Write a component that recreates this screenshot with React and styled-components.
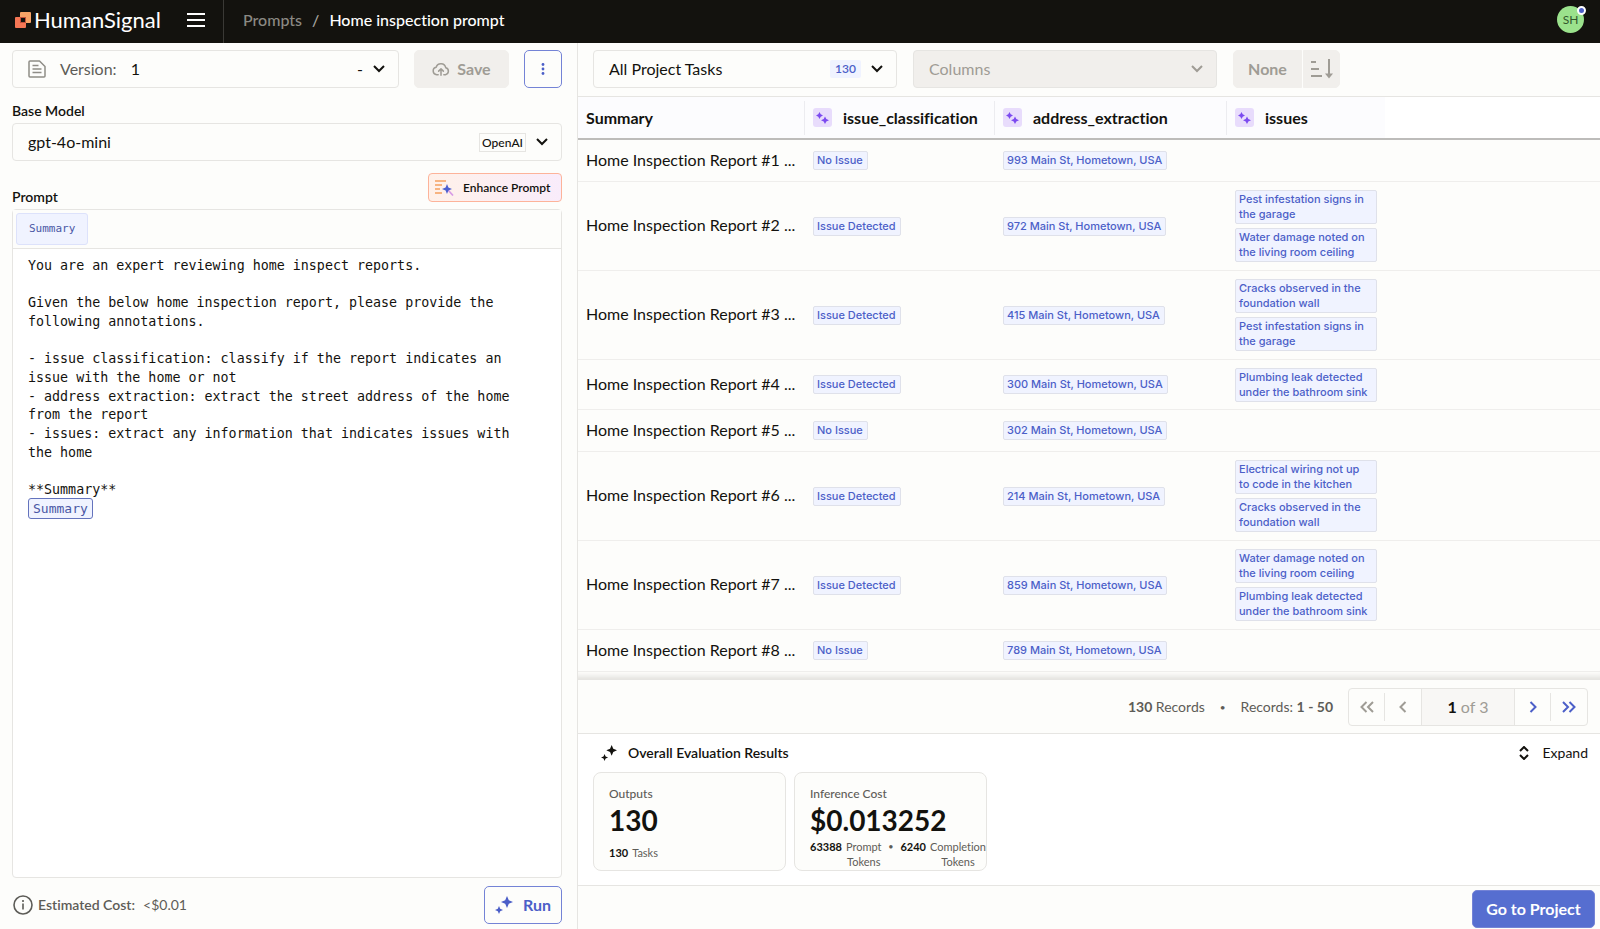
import React, { useState } from 'react'
import styled, { createGlobalStyle, ThemeProvider } from 'styled-components'

const theme = {
  font: 'Lato, "Liberation Sans", sans-serif',
  mono: '"DejaVu Sans Mono", "Liberation Mono", monospace',
  colors: {
    ink: '#13120e',
    text: '#1b1a17',
    muted: '#5d5c57',
    faint: '#9f9c95',
    line: '#e6e5e2',
    surface: '#fdfdfb',
    disabled: '#f1efec',
    primary: '#4c5fc8',
    primaryLine: '#7483d6',
    primaryFill: '#566ed0',
    chip: '#f0f3ff'
  }
}

const GlobalStyle = createGlobalStyle`
  *, *::before, *::after {
    box-sizing: border-box;
  }

  body {
    margin: 0;
    background: #fdfdfb;
    color: #13120e;
    font-variant-ligatures: none;
  }

  button, select {
    font: inherit;
    color: inherit;
  }
`

const Page = styled.div`
  display: grid;
  grid-template-rows: 43px minmax(0, 1fr);
  height: 100vh;
  font-family: ${props => props.theme.font};
  font-size: 16px;
  line-height: 20px;
`

const TopBar = styled.header`
  display: flex;
  align-items: stretch;
  padding: 0 16px 4px 15px;
  background: ${props => props.theme.colors.ink};
  color: #ffffff;
`

const Brand = styled.a`
  display: flex;
  align-items: center;
  gap: 3px;
  width: 172px;
  color: inherit;
  font-size: 22px;
  text-decoration: none;
`

const MenuButton = styled.button`
  display: flex;
  align-items: center;
  padding: 0;
  border: none;
  background: none;
`

const Crumbs = styled.nav`
  display: flex;
  align-items: center;
  gap: 10px;
  flex: 1;
  margin: 0 0 -4px 18px;
  padding: 0 0 4px 19px;
  border-left: 1px solid #3a3935;
  font-weight: 500;
  color: #a8a6a0;

  a {
    color: #8b8983;
    text-decoration: none;
  }

  strong {
    font-weight: 500;
    color: #ffffff;
  }
`

const Avatar = styled.button`
  position: relative;
  align-self: center;
  width: 27px;
  height: 27px;
  padding: 0;
  border: none;
  border-radius: 50%;
  background: #9be28c;
  color: #33582c;
  font-size: 12px;
  line-height: 27px;

  &::after {
    content: '';
    position: absolute;
    top: 0;
    right: -2px;
    width: 9px;
    height: 9px;
    border: 2px solid #ffffff;
    border-radius: 50%;
    background: ${props => props.theme.colors.primary};
  }
`

const Workspace = styled.main`
  display: grid;
  grid-template-columns: 578px minmax(0, 1fr);
  min-height: 0;
`

const Editor = styled.section`
  display: flex;
  flex-direction: column;
  padding: 7px 15px 5px 12px;
  border-right: 1px solid ${props => props.theme.colors.line};
`

const Toolbar = styled.div`
  display: flex;
  gap: 15px;
`

const Field = styled.div`
  display: flex;
  align-items: center;
  flex: ${props => props.$grow ? 1 : 'none'};
  width: ${props => props.$width || 'auto'};
  height: 38px;
  padding: 0 13px 0 15px;
  border: 1px solid ${props => props.theme.colors.line};
  border-radius: 4px;
  background: ${props => props.$disabled ? props.theme.colors.disabled : props.theme.colors.surface};
  color: ${props => props.$disabled ? props.theme.colors.faint : 'inherit'};

  label {
    margin: 0 14px;
    color: ${props => props.theme.colors.muted};
  }

  select {
    flex: 1;
    height: 100%;
    padding: 0;
    appearance: none;
    border: none;
    background: none;
    opacity: 1;
    color: inherit;
  }

  > svg:last-child {
    margin-left: 10px;
  }
`

const Provider = styled.span`
  padding: 0 2px;
  border: 1px solid ${props => props.theme.colors.line};
  font-size: 12px;
  font-weight: 500;
  line-height: 17px;
`

const Count = styled.span`
  padding: 0 5px;
  border-radius: 2px;
  background: ${props => props.theme.colors.chip};
  color: ${props => props.theme.colors.primary};
  font-size: 12px;
  font-weight: 600;
  line-height: 18px;
`

const Button = styled.button`
  display: flex;
  align-items: center;
  justify-content: center;
  gap: 10px;
  width: ${props => props.$width};
  height: 38px;
  padding: 0;
  border: 1px solid ${props => props.theme.colors.primaryLine};
  border-radius: 5px;
  background: ${props => props.$filled ? props.theme.colors.primaryFill : props.theme.colors.surface};
  color: ${props => props.$filled ? '#ffffff' : props.theme.colors.primary};
  font-weight: 700;

  &:disabled {
    gap: 7px;
    border-color: ${props => props.theme.colors.disabled};
    background: ${props => props.theme.colors.disabled};
    color: ${props => props.theme.colors.faint};
  }
`

const FieldLabel = styled.label`
  font-size: 14px;
  font-weight: 600;
  line-height: 16px;
`

const ModelGroup = styled.div`
  display: flex;
  flex-direction: column;
  gap: 4px;
  margin: 15px 0 12px;
`

const PromptHead = styled.div`
  display: flex;
  align-items: flex-end;
  justify-content: space-between;
  margin-bottom: 4px;
`

const EnhanceButton = styled.button`
  display: flex;
  align-items: center;
  gap: 9px;
  width: 134px;
  height: 29px;
  margin-bottom: 3px;
  padding: 0 6px;
  border: 1px solid #fdb39a;
  border-radius: 4px;
  background: linear-gradient(90deg, #fff1e9, #f9ecfb);
  color: ${props => props.theme.colors.ink};
  font-size: 12px;
  font-weight: 600;
`

const PromptBox = styled.div`
  display: flex;
  flex-direction: column;
  flex: 1;
  margin-bottom: 8px;
  border: 1px solid ${props => props.theme.colors.line};
  border-radius: 4px;
  background: #ffffff;
  font-family: ${props => props.theme.mono};
`

const VariableBar = styled.div`
  padding: 3px;
  border-bottom: 1px solid ${props => props.theme.colors.line};
  background: ${props => props.theme.colors.surface};
`

const Variable = styled.button`
  display: block;
  height: 32px;
  padding: 0 12px;
  border: 1px solid #dde2fb;
  border-radius: 3px;
  background: ${props => props.theme.colors.chip};
  color: #4a57a5;
  font-family: inherit;
  font-size: 11px;
`

const PromptText = styled.textarea`
  display: block;
  height: 249px;
  padding: 8px 15px 0;
  border: none;
  outline: none;
  resize: none;
  overflow: hidden;
  background: none;
  color: ${props => props.theme.colors.ink};
  font-family: inherit;
  line-height: 1.4;
`

const InlineVariable = styled.button`
  align-self: flex-start;
  height: 21px;
  margin: 0 15px;
  padding: 0 4px;
  border: 1px solid #6473bd;
  border-radius: 3px;
  background: ${props => props.theme.colors.chip};
  color: #4a57a5;
  font-family: inherit;
  font-size: 13px;
  line-height: 18px;
`

const EditorFooter = styled.div`
  display: flex;
  align-items: center;
  gap: 5px;
  padding-left: 1px;
  color: ${props => props.theme.colors.muted};
  font-size: 14px;

  strong {
    font-weight: 600;
  }

  span {
    flex: 1;
    margin-left: 3px;
  }

  button {
    font-size: 16px;
  }
`

const Results = styled.section`
  display: grid;
  grid-template-rows: 54px minmax(0, 1fr) 55px auto 43px;
  min-height: 0;
`

const ResultsBar = styled.div`
  display: flex;
  gap: 16px;
  padding: 7px 15px;
  border-bottom: 1px solid ${props => props.theme.colors.line};
`

const SortGroup = styled.div`
  display: flex;
  gap: 1px;

  button:first-child {
    border-radius: 5px 0 0 5px;
  }

  button:last-child {
    border-radius: 0 5px 5px 0;
  }
`

const TableArea = styled.div`
  overflow: hidden;
  box-shadow: inset 0 -8px 6px -6px #dddcd8;
`

const Table = styled.table`
  width: 100%;
  table-layout: fixed;
  border-collapse: separate;
  border-spacing: 0;

  th, td {
    padding: 0 8px;
    text-align: left;
    vertical-align: middle;
  }

  th {
    height: 43px;
    border-bottom: 2px solid #bdbcba;
    background: linear-gradient(#ececf0, #ececf0) right center / 1px 34px no-repeat #fcfcfe;
    font-weight: 700;
  }

  th:nth-child(n + 4) {
    background: #fcfcfe;
  }

  th:last-child {
    background: #ffffff;
  }

  td {
    border-bottom: 1px solid #efeeec;
  }
`

const Row = styled.tr`
  height: ${props => props.$lines === 0 ? '42px' : props.$lines === 1 ? '50px' : '89px'};
`

const Summary = styled.div`
  padding-bottom: 2px;
  overflow: hidden;
  white-space: nowrap;
`

const HeadCell = styled.div`
  display: flex;
  align-items: center;
  gap: 11px;
`

const AiBadge = styled.span`
  display: grid;
  place-items: center;
  width: 19px;
  height: 19px;
  border-radius: 3px;
  background: #e8dcfc;
  color: #7c4af0;
`

const ChipStack = styled.div`
  display: flex;
  flex-direction: column;
  align-items: ${props => props.$fill ? 'stretch' : 'flex-start'};
  gap: 4px;
`

const Chip = styled.span`
  padding: 1px 4px 1px 3px;
  border: 1px solid #dfe1ea;
  border-radius: 2px;
  background: ${props => props.theme.colors.chip};
  color: ${props => props.theme.colors.primary};
  font-family: Inter, sans-serif;
  font-size: 11px;
  font-weight: 500;
  line-height: 15px;
`

const Paging = styled.div`
  display: flex;
  align-items: center;
  justify-content: flex-end;
  gap: 15px;
  padding: 0 12px;
  border-top: 1px solid ${props => props.theme.colors.line};
  border-bottom: 1px solid ${props => props.theme.colors.line};
  color: ${props => props.theme.colors.muted};
  font-size: 14px;

  strong {
    font-weight: 700;
  }
`

const Dot = styled.span`
  font-size: ${props => props.$size};
`

const Pager = styled.div`
  display: grid;
  grid-template-columns: 36px 36px 94px 36px 36px;
  height: 38px;
  border: 1px solid ${props => props.theme.colors.line};
  border-radius: 4px;
  font-size: 16px;
`

const PageButton = styled.button`
  display: grid;
  place-items: center;
  height: 28px;
  margin: 4px 0;
  padding: 0;
  border: 0 solid ${props => props.theme.colors.line};
  border-right-width: ${props => props.$divided ? '1px' : 0};
  background: none;
  color: ${props => props.theme.colors.primary};

  &:disabled {
    color: ${props => props.theme.colors.faint};
  }
`

const PageNumber = styled.span`
  display: flex;
  align-items: center;
  justify-content: center;
  gap: 4px;
  border: 0 solid ${props => props.theme.colors.line};
  border-width: 0 1px;
  background: #f8f7f5;
  color: ${props => props.theme.colors.faint};

  strong {
    color: ${props => props.theme.colors.ink};
  }
`

const Evaluation = styled.div`
  padding: 9px 12px 14px 15px;
  border-bottom: 1px solid ${props => props.theme.colors.line};
  background: #ffffff;
`

const EvaluationHead = styled.div`
  display: flex;
  align-items: center;
  gap: 11px;
  margin-bottom: 9px;
  padding-left: 8px;
  font-size: 14px;

  h2 {
    flex: 1;
    margin: 0;
    font-size: 14px;
    font-weight: 600;
  }
`

const ExpandButton = styled.button`
  display: flex;
  align-items: center;
  gap: 13px;
  padding: 0;
  border: none;
  background: none;
  color: ${props => props.theme.colors.ink};
`

const Cards = styled.div`
  display: flex;
  gap: 8px;
`

const Card = styled.article`
  display: flex;
  flex-direction: column;
  width: 193px;
  height: 99px;
  padding: 13px 0 0 15px;
  border: 1px solid ${props => props.theme.colors.line};
  border-radius: 8px;
  background: ${props => props.theme.colors.surface};
  color: ${props => props.theme.colors.muted};
  font-size: 12px;
  line-height: 16px;

  h3 {
    margin: 0;
    font-size: 12px;
    font-weight: 500;
  }
`

const Figure = styled.div`
  color: ${props => props.theme.colors.ink};
  font-size: 28px;
  font-weight: 700;
  line-height: 36px;
`

const Breakdown = styled.div`
  display: flex;
  gap: 4px;
  margin-top: ${props => props.$roomy ? '7px' : '1px'};
  font-size: 11px;
  line-height: 15px;
  text-align: center;

  strong {
    color: ${props => props.theme.colors.ink};
  }

  ${Dot} {
    width: 13px;
  }
`

const ResultsFooter = styled.footer`
  display: flex;
  align-items: flex-end;
  justify-content: flex-end;
  padding: 0 5px 1px;
`

const LogoMark = () => (
  <svg width='16' height='16' viewBox='0 0 16 16' aria-hidden='true'>
    <rect x='5' width='11' height='11' rx='1' fill='#f9a467' />
    <path d='M1 5h4v6h6v4a1 1 0 0 1-1 1H1a1 1 0 0 1-1-1V6a1 1 0 0 1 1-1z' fill='#f57654' />
    <path d='M5 5h6v6H5z' fill='#c4513a' />
    <path d='M6 6h4v4H6z' fill='#13120e' />
  </svg>
)

const MenuIcon = () => (
  <svg width='18' height='15' viewBox='0 0 18 15' fill='none' stroke='#ffffff' strokeWidth='2'>
    <path d='M0 2h18M0 8h18M0 14h18' />
  </svg>
)

const FileIcon = () => (
  <svg width='18' height='18' viewBox='0 0 18 18' fill='none' stroke='#8f8d87' strokeWidth='1.500' strokeLinejoin='round'>
    <path d='M2 1h9.500L17 6.500V16a1 1 0 0 1-1 1H2a1 1 0 0 1-1-1V2a1 1 0 0 1 1-1z' />
    <path d='M4.500 5.500h6M4.500 9h9M4.500 12.500h9' />
  </svg>
)

const CloudIcon = () => (
  <svg width='18' height='15' viewBox='0 0 19 15' fill='none' stroke='currentColor' strokeWidth='1.600' strokeLinecap='round' strokeLinejoin='round'>
    <path d='M6.500 13H5a4 4 0 0 1-.6-7.900A5.200 5.200 0 0 1 14.500 5.600 3.800 3.800 0 0 1 14.200 13H12.500' />
    <path d='M9.500 13.500V7M7 9.200l2.500-2.400L12 9.200' />
  </svg>
)

const DotsIcon = () => (
  <svg width='4' height='12' viewBox='0 0 4 12' fill='currentColor'>
    <circle cx='2' cy='1.500' r='1.400' />
    <circle cx='2' cy='6' r='1.400' />
    <circle cx='2' cy='10.500' r='1.400' />
  </svg>
)

const ChevronDown = () => (
  <svg width='12' height='8' viewBox='0 0 12 8' fill='none' stroke='currentColor' strokeWidth='2' aria-hidden='true'>
    <path d='M1 1l5 5 5-5' />
  </svg>
)

const EnhanceIcon = () => (
  <svg width='19' height='16' viewBox='0 0 19 16' fill='none'>
    <path d='M0 1h11M0 5h7M0 9h5M0 13h7' stroke='#f5a05f' strokeWidth='1.700' />
    <path d='M13 10l5 5.500' stroke='#d79be6' strokeWidth='1.700' />
    <path d='M12 4l1.400 3.600 3.600 1.400-3.600 1.400L12 14l-1.400-3.600L7 9l3.600-1.400z' fill='#4c5fcf' />
  </svg>
)

const InfoIcon = () => (
  <svg width='20' height='20' viewBox='0 0 20 20' fill='none' stroke='currentColor' strokeWidth='1.600'>
    <circle cx='10' cy='10' r='9' />
    <path d='M10 8.500v6M10 5v2' />
  </svg>
)

const SparkIcon = ({ size = 18 }) => (
  <svg width={size} height={size} viewBox='0 0 18 18' fill='currentColor' aria-hidden='true'>
    <path d='M12 0l1.800 4.200L18 6l-4.200 1.800L12 12l-1.800-4.200L6 6l4.200-1.800z' />
    <path d='M4 10l1.200 2.800L8 14l-2.800 1.200L4 18l-1.200-2.800L0 14l2.800-1.200z' />
  </svg>
)

const TwinStars = () => (
  <svg width='13' height='12' viewBox='0 0 13 12' fill='currentColor'>
    <path d='M3.500 0l1.200 2.300L7 3.500l-2.300 1.200L3.500 7 2.300 4.700 0 3.500l2.300-1.200z' />
    <path d='M9 4.500l1.300 2.500L13 8.300l-2.700 1.200L9 12 7.700 9.500 5 8.300 7.700 7z' />
  </svg>
)

const SortIcon = () => (
  <svg width='22' height='20' viewBox='0 0 22 20' fill='none' stroke='currentColor' strokeWidth='2'>
    <path d='M0 3h5M0 10h8M0 17h11M18 0v17' />
    <path d='M14 14.500h8L18 19.500z' fill='currentColor' stroke='none' />
  </svg>
)

const Chevrons = ({ d, width = 8 }) => (
  <svg width={width} height='12' viewBox={`0 0 ${width} 12`} fill='none' stroke='currentColor' strokeWidth='2'>
    <path d={d} />
  </svg>
)

const ExpandIcon = () => (
  <svg width='10' height='14' viewBox='0 0 10 14' fill='none' stroke='currentColor' strokeWidth='2'>
    <path d='M1 5l4-4 4 4M1 9l4 4 4-4' />
  </svg>
)

const initialPrompt = `You are an expert reviewing home inspect reports.

Given the below home inspection report, please provide the
following annotations.

- issue classification: classify if the report indicates an
issue with the home or not
- address extraction: extract the street address of the home
from the report
- issues: extract any information that indicates issues with
the home

**Summary**`

const PEST = 'Pest infestation signs in the garage'
const WATER = 'Water damage noted on the living room ceiling'
const CRACKS = 'Cracks observed in the foundation wall'
const PLUMBING = 'Plumbing leak detected under the bathroom sink'
const WIRING = 'Electrical wiring not up to code in the kitchen'

const tasks = [
  { id: 1, street: 993, issues: [] },
  { id: 2, street: 972, issues: [PEST, WATER] },
  { id: 3, street: 415, issues: [CRACKS, PEST] },
  { id: 4, street: 300, issues: [PLUMBING] },
  { id: 5, street: 302, issues: [] },
  { id: 6, street: 214, issues: [WIRING, CRACKS] },
  { id: 7, street: 859, issues: [WATER, PLUMBING] },
  { id: 8, street: 789, issues: [] }
]

const AiHeading = ({ children }) => (
  <HeadCell>
    <AiBadge><TwinStars /></AiBadge>
    {children}
  </HeadCell>
)

const TaskRow = ({ task }) => (
  <Row $lines={task.issues.length}>
    <td><Summary>{`Home Inspection Report #${task.id} ...`}</Summary></td>
    <td>
      <ChipStack>
        <Chip>{task.issues.length ? 'Issue Detected' : 'No Issue'}</Chip>
      </ChipStack>
    </td>
    <td>
      <ChipStack>
        <Chip>{`${task.street} Main St, Hometown, USA`}</Chip>
      </ChipStack>
    </td>
    <td>
      <ChipStack $fill>
        {task.issues.map(issue => <Chip key={issue}>{issue}</Chip>)}
      </ChipStack>
    </td>
    <td />
  </Row>
)

const PromptEditor = () => {
  const [prompt, setPrompt] = useState(initialPrompt)

  return (
    <Editor>
      <Toolbar>
        <Field $grow>
          <FileIcon />
          <label htmlFor='version'>Version:</label>
          <select id='version'>
            <option>1</option>
          </select>
          <span>-</span>
          <ChevronDown />
        </Field>
        <Button $width='95px' disabled>
          <CloudIcon />
          Save
        </Button>
        <Button $width='38px' aria-label='More actions'>
          <DotsIcon />
        </Button>
      </Toolbar>
      <ModelGroup>
        <FieldLabel htmlFor='model'>Base Model</FieldLabel>
        <Field>
          <select id='model'>
            <option>gpt-4o-mini</option>
          </select>
          <Provider>OpenAI</Provider>
          <ChevronDown />
        </Field>
      </ModelGroup>
      <PromptHead>
        <FieldLabel htmlFor='prompt'>Prompt</FieldLabel>
        <EnhanceButton>
          <EnhanceIcon />
          Enhance Prompt
        </EnhanceButton>
      </PromptHead>
      <PromptBox>
        <VariableBar>
          <Variable>Summary</Variable>
        </VariableBar>
        <PromptText
          id='prompt'
          spellCheck={false}
          value={prompt}
          onChange={e => setPrompt(e.target.value)}
        />
        <InlineVariable>Summary</InlineVariable>
      </PromptBox>
      <EditorFooter>
        <InfoIcon />
        <strong>Estimated Cost:</strong>
        <span>&lt;$0.01</span>
        <Button $width='78px'>
          <SparkIcon />
          Run
        </Button>
      </EditorFooter>
    </Editor>
  )
}

const ResultsPanel = () => (
  <Results>
    <ResultsBar>
      <Field $width='304px'>
        <select aria-label='Tasks'>
          <option>All Project Tasks</option>
        </select>
        <Count>130</Count>
        <ChevronDown />
      </Field>
      <Field $width='304px' $disabled>
        <select aria-label='Columns' disabled>
          <option>Columns</option>
        </select>
        <ChevronDown />
      </Field>
      <SortGroup>
        <Button $width='69px' disabled>None</Button>
        <Button $width='37px' disabled aria-label='Sort direction'>
          <SortIcon />
        </Button>
      </SortGroup>
    </ResultsBar>
    <TableArea>
      <Table>
        <colgroup>
          <col width='227' />
          <col width='190' />
          <col width='232' />
          <col width='158' />
          <col />
        </colgroup>
        <thead>
          <tr>
            <th>Summary</th>
            <th><AiHeading>issue_classification</AiHeading></th>
            <th><AiHeading>address_extraction</AiHeading></th>
            <th><AiHeading>issues</AiHeading></th>
            <th />
          </tr>
        </thead>
        <tbody>
          {tasks.map(task => <TaskRow key={task.id} task={task} />)}
        </tbody>
      </Table>
    </TableArea>
    <Paging>
      <span><strong>130</strong> Records</span>
      <Dot $size='10px'>•</Dot>
      <span>Records: <strong>1 - 50</strong></span>
      <Pager>
        <PageButton $divided disabled aria-label='First page'>
          <Chevrons width={14} d='M6.500 1l-5 5 5 5M13 1L8 6l5 5' />
        </PageButton>
        <PageButton disabled aria-label='Previous page'>
          <Chevrons d='M6.500 1l-5 5 5 5' />
        </PageButton>
        <PageNumber><strong>1</strong> of 3</PageNumber>
        <PageButton $divided aria-label='Next page'>
          <Chevrons d='M1.500 1l5 5-5 5' />
        </PageButton>
        <PageButton aria-label='Last page'>
          <Chevrons width={14} d='M1 1l5 5-5 5M7.500 1l5 5-5 5' />
        </PageButton>
      </Pager>
    </Paging>
    <Evaluation>
      <EvaluationHead>
        <SparkIcon size={16} />
        <h2>Overall Evaluation Results</h2>
        <ExpandButton>
          <ExpandIcon />
          Expand
        </ExpandButton>
      </EvaluationHead>
      <Cards>
        <Card>
          <h3>Outputs</h3>
          <Figure>130</Figure>
          <Breakdown $roomy>
            <strong>130</strong>
            <span>Tasks</span>
          </Breakdown>
        </Card>
        <Card>
          <h3>Inference Cost</h3>
          <Figure>$0.013252</Figure>
          <Breakdown>
            <strong>63388</strong>
            <span>Prompt<br />Tokens</span>
            <Dot $size='9px'>•</Dot>
            <strong>6240</strong>
            <span>Completion<br />Tokens</span>
          </Breakdown>
        </Card>
      </Cards>
    </Evaluation>
    <ResultsFooter>
      <Button $filled $width='123px'>Go to Project</Button>
    </ResultsFooter>
  </Results>
)

const App = () => (
  <ThemeProvider theme={theme}>
    <GlobalStyle />
    <Page>
      <TopBar>
        <Brand href='#'>
          <LogoMark />
          HumanSignal
        </Brand>
        <MenuButton aria-label='Menu'>
          <MenuIcon />
        </MenuButton>
        <Crumbs>
          <a href='#'>Prompts</a>
          <span>/</span>
          <strong>Home inspection prompt</strong>
        </Crumbs>
        <Avatar>SH</Avatar>
      </TopBar>
      <Workspace>
        <PromptEditor />
        <ResultsPanel />
      </Workspace>
    </Page>
  </ThemeProvider>
)

export default App
